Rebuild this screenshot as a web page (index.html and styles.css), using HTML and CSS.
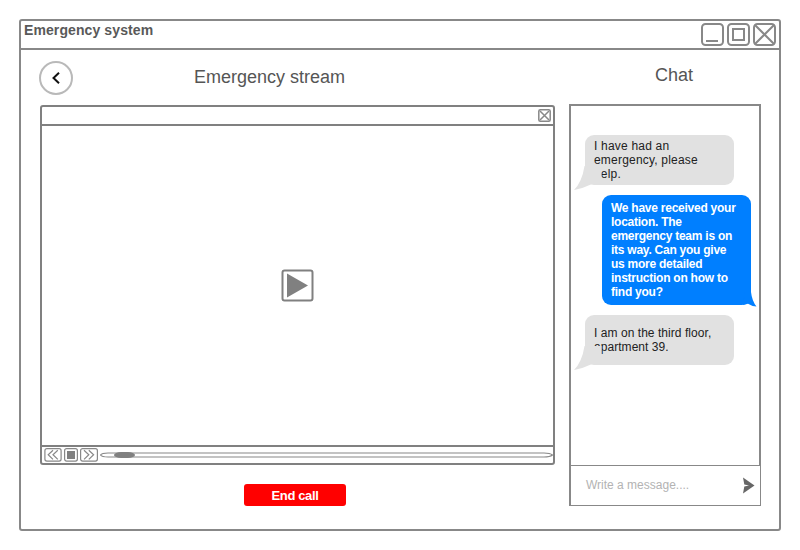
FILE: index.html
```html
<!DOCTYPE html>
<html lang="en">
<head>
<meta charset="utf-8">
<title>Emergency system</title>
<link rel="stylesheet" href="styles.css">
</head>
<body>
<div class="window">
  <header class="titlebar">
    <span class="app-title">Emergency system</span>
    <svg class="window-controls" width="76" height="24" viewBox="0 0 76 24">
      <rect x="1" y="1" width="21" height="21" rx="3.5"/>
      <path d="M5 18h12"/>
      <rect x="27" y="1" width="21" height="21" rx="3.5"/>
      <rect x="32" y="6" width="11" height="11"/>
      <rect x="53" y="1" width="21" height="21" rx="3.5"/>
      <path d="M53.7 1.7L73.3 21.3M73.3 1.7L53.7 21.3"/>
    </svg>
  </header>
  <main class="content">
    <section class="stream">
      <div class="stream-head">
        <button class="back" aria-label="Back">
          <svg width="10" height="14" viewBox="0 0 10 14"><path d="M8 1.7L2.5 7L8 12.3"/></svg>
        </button>
        <h1 class="heading">Emergency stream</h1>
      </div>
      <div class="player">
        <div class="player-top">
          <svg class="line-icon close" width="13" height="13" viewBox="0 0 13 13"><rect x=".8" y=".8" width="11.4" height="11.4" rx="1.5"/><path d="M2 2l9 9M11 2l-9 9"/></svg>
        </div>
        <div class="screen">
          <svg class="play" width="33" height="33" viewBox="0 0 33 33"><rect x="1.5" y="1.5" width="30" height="30" rx="2"/><path d="M6 4.5L27 16.5L6 28.5Z"/></svg>
        </div>
        <div class="controls">
          <svg class="line-icon" width="18" height="14" viewBox="0 0 18 14"><rect x=".9" y=".7" width="16.2" height="12.4" rx="2"/><path d="M9 2.2L4.2 6.8L9 11.4M13.8 2.2L9 6.8L13.8 11.4"/></svg>
          <svg class="line-icon" width="14" height="14" viewBox="0 0 14 14"><rect x=".6" y=".7" width="12.8" height="12.4" rx="2"/><rect class="solid" x="3" y="3" width="8" height="8"/></svg>
          <svg class="line-icon" width="18" height="14" viewBox="0 0 18 14"><rect x=".6" y=".7" width="16.8" height="12.4" rx="2"/><path d="M4 2.2L8.8 6.8L4 11.4M8.8 2.2L13.6 6.8L8.8 11.4"/></svg>
          <svg class="track" width="453" height="14" viewBox="0 0 453 14"><path d="M.5 7Q2 5 8 5H444Q450 5 452.500 7Q450 9 444 9H8Q2 9 .5 7Z"/><rect class="solid" x="14" y="4" width="21" height="6" rx="7" ry="3"/></svg>
        </div>
      </div>
      <button class="end-call">End call</button>
    </section>
    <aside class="chat">
      <h2 class="heading chat-title">Chat</h2>
      <div class="panel">
        <div class="messages">
          <div class="bubble incoming first">
            <p>I have had an<br>emergency, please<br>help.</p>
            <svg class="tail-left" width="28" height="26" viewBox="0 0 28 26"><path d="M10.500 0H27.500V18Q22 20 18 18Q10 22 0 24Q8 16 10.500 0Z"/></svg>
          </div>
          <div class="bubble outgoing">
            <p>We have received your<br>location. The<br>emergency team is on<br>its way. Can you give<br>us more detailed<br>instruction on how to<br>find you?</p>
            <svg class="tail-right" width="14" height="15" viewBox="0 0 14 15"><path d="M2 0H8Q9 9 13.500 14.500Q9 14.500 5 11.800L0 13Z"/></svg>
          </div>
          <div class="bubble incoming second">
            <p>I am on the third floor,<br>apartment 39.</p>
            <svg class="tail-left" width="28" height="26" viewBox="0 0 28 26"><path d="M10.500 0H27.500V18Q22 20 18 18Q10 22 0 24Q8 16 10.500 0Z"/></svg>
          </div>
        </div>
        <div class="compose">
          <span>Write a message....</span>
          <svg width="13" height="17" viewBox="0 0 13 17"><path d="M1 .5L12.500 8.500L1 16.500L2.300 9.500L7 8.500L2.300 7.500Z"/></svg>
        </div>
      </div>
    </aside>
  </main>
</div>
</body>
</html>
```

FILE: styles.css
```css
* { box-sizing: border-box; }
body {
  margin: 0;
  padding: 19px;
  background: #fff;
  font-family: "Liberation Sans", Arial, sans-serif;
  font-size: 12px;
}
button { padding: 0; font-family: inherit; }
svg { display: block; flex: none; }
p { margin: 0; }
.window {
  width: 762px;
  height: 512px;
  border: 2px solid #888;
  border-radius: 3px;
}
.titlebar {
  display: flex;
  justify-content: space-between;
  height: 29px;
  padding: 2px 2px 0 3px;
  border-bottom: 2px solid #888;
}
.app-title {
  font-size: 14px;
  line-height: 15px;
  font-weight: bold;
  letter-spacing: .1px;
  color: #595959;
}
.window-controls { fill: none; stroke: #888; stroke-width: 2; }
.content { display: flex; gap: 14px; padding: 0 18px 0 19px; }
.stream { width: 515px; }
.stream-head {
  display: flex;
  align-items: center;
  gap: 121px;
  height: 55px;
}
.stream-head .heading { padding-bottom: 2px; }
.back {
  display: flex;
  align-items: center;
  justify-content: center;
  width: 34px;
  height: 34px;
  margin-left: -1px;
  margin-top: 1px;
  background: #fff;
  border: 2px solid #b9b9b9;
  border-radius: 50%;
}
.back path { fill: none; stroke: #111; stroke-width: 2; }
.heading {
  margin: 0;
  font-size: 18px;
  line-height: 20px;
  font-weight: normal;
  color: #555;
}
.player {
  display: flex;
  flex-direction: column;
  height: 360px;
  border: 2px solid #808080;
  border-radius: 3px;
}
.player-top {
  display: flex;
  justify-content: flex-end;
  height: 19px;
  padding: 2px 2px 0 0;
  border-bottom: 2px solid #808080;
}
.line-icon, .track { fill: none; stroke: #888; stroke-width: 1.2; }
.close { stroke-width: 1.5; }
.solid { fill: #808080; stroke: none; }
.screen {
  display: flex;
  flex: 1;
  align-items: center;
  justify-content: center;
  padding-bottom: 1px;
}
.play rect { fill: none; stroke: #808080; stroke-width: 2; }
.play path { fill: #808080; }
.controls {
  display: flex;
  align-items: center;
  gap: 2px;
  height: 18px;
  padding-left: 2px;
  border-top: 2px solid #808080;
}
.end-call {
  display: block;
  width: 102px;
  height: 22px;
  margin: 19px 0 0 204px;
  border: 0;
  border-radius: 3px;
  background: #f00;
  color: #fff;
  font-size: 13px;
  font-weight: bold;
  letter-spacing: -.35px;
}
.chat { width: 192px; }
.chat-title { padding: 15px 0 19px 86px; }
.panel {
  height: 402px;
  border-left: 2px solid #888;
}
.messages {
  height: 361px;
  padding: 29px 0 0 14px;
  border-top: 2px solid #888;
  border-right: 2px solid #888;
}
.bubble {
  position: relative;
  border-radius: 9px;
  line-height: 14px;
}
.incoming {
  width: 149px;
  height: 50px;
  padding-left: 9px;
  background: #e1e1e1;
  color: #222;
}
.first { padding-top: 4px; letter-spacing: .2px; }
.second { padding-top: 11px; letter-spacing: .05px; }
.outgoing {
  width: 149px;
  height: 110px;
  margin: 10px 0 10px 17px;
  padding: 6px 0 0 9px;
  background: #007fff;
  color: #fff;
  font-weight: bold;
  letter-spacing: -.25px;
}
.tail-left { position: absolute; left: -11px; top: 31px; fill: #e1e1e1; }
.tail-right { position: absolute; right: -6px; bottom: -2px; fill: #007fff; }
.compose {
  display: flex;
  align-items: center;
  justify-content: space-between;
  height: 41px;
  padding: 0 5px 0 15px;
  border: 1px solid #888;
  border-left: 0;
  color: #b3b3b3;
}
.compose span { padding-bottom: 2px; }
.compose path { fill: #666; }
```
